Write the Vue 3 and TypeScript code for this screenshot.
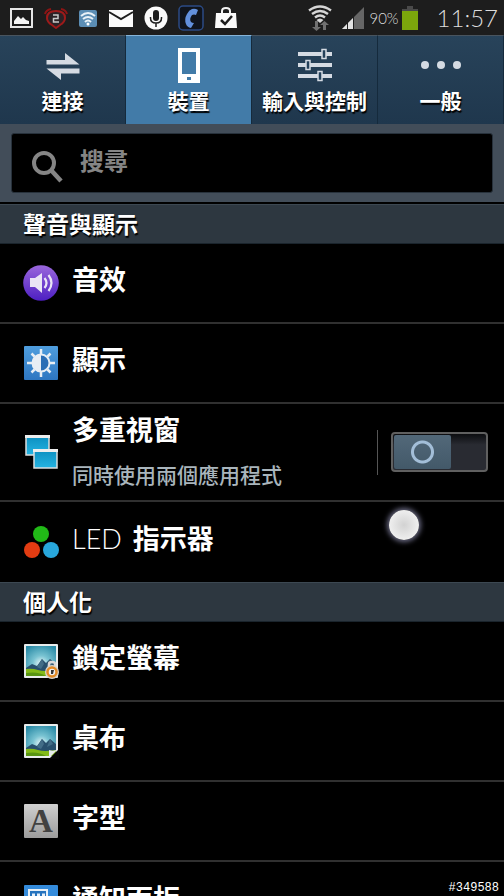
<script setup lang="ts">
import { ref } from 'vue'

type IconName = 'sound' | 'display' | 'windows' | 'led' | 'lock' | 'wallpaper' | 'font' | 'panel'

interface Item {
  icon: IconName
  title: string
  latin?: string
  note?: string
}

interface Section {
  heading: string
  items: Item[]
}

const tabs = [
  { id: 'link', label: '連接' },
  { id: 'device', label: '裝置' },
  { id: 'input', label: '輸入與控制' },
  { id: 'general', label: '一般' },
]
const activeTab = ref('device')
const query = ref('')
const multiWindow = ref(false)

const sections: Section[] = [
  {
    heading: '聲音與顯示',
    items: [
      { icon: 'sound', title: '音效' },
      { icon: 'display', title: '顯示' },
      { icon: 'windows', title: '多重視窗', note: '同時使用兩個應用程式' },
      { icon: 'led', latin: 'LED', title: '指示器' },
    ],
  },
  {
    heading: '個人化',
    items: [
      { icon: 'lock', title: '鎖定螢幕' },
      { icon: 'wallpaper', title: '桌布' },
      { icon: 'font', title: '字型' },
      { icon: 'panel', title: '通知面板' },
    ],
  },
]
</script>

<template>
  <div class="screen">
    <header class="status">
      <div class="notices">
        <svg width="24" height="22" viewBox="0 0 24 22">
          <rect x="1" y="2" width="21" height="18" fill="#1b1b1b" stroke="#e6e6e6" stroke-width="2" />
          <path d="M4 17v-3l4-5 3 3 2-2 3 3 3 1v3z" fill="#f4f4f4" />
        </svg>
        <svg width="24" height="22" viewBox="0 0 24 22">
          <path d="M1 7q1-4 6-5M23 7q-1-4-6-5" fill="none" stroke="#8d1414" stroke-width="2" />
          <path d="M3 11q0-7 9-7t9 7q0 4-5 7l-4 3-4-3q-5-3-5-7z" fill="#2b2226" stroke="#9d1a1a" stroke-width="2" />
          <path d="M9 8h5v3.500H9.500V15H15" fill="none" stroke="#c9c9c9" stroke-width="1.500" />
        </svg>
        <svg width="20" height="22" viewBox="0 0 20 22">
          <rect x="1" y="3" width="18" height="17" rx="2" fill="#5b8db4" />
          <path d="M3 9q7-6 14 0M5 12q5-4 10 0M7 15q3-3 6 0" fill="none" stroke="#e9f1f7" stroke-width="2" />
          <circle cx="10" cy="17" r="1.500" fill="#fff" />
        </svg>
        <svg width="26" height="22" viewBox="0 0 26 22">
          <path d="M1 3h24v17H1z" fill="#fafafa" />
          <path d="M1 5l12 7 12-7" fill="none" stroke="#1d1d1d" stroke-width="2" />
        </svg>
        <svg width="24" height="24" viewBox="0 0 24 24">
          <circle cx="12" cy="12" r="11.500" fill="#fafafa" />
          <rect x="9" y="4" width="6" height="11" rx="3" fill="#1d1d1d" />
          <path d="M6.500 11v1q0 5 5.500 5t5.500-5v-1M12 17v4" fill="none" stroke="#1d1d1d" stroke-width="1.500" />
        </svg>
        <svg width="26" height="26" viewBox="0 0 26 26">
          <rect x="1" y="1" width="24" height="24" rx="4" fill="#10141c" stroke="#2b4a84" stroke-width="1.500" />
          <path d="M14 4q3-1 6 1l-2 5q-2-1-4 0-3 4-1 7 1 1 3 1l-3 5q-4-1-5-4Q6 14 9 9q2-4 5-5z" fill="#6290dc" />
        </svg>
        <svg width="24" height="24" viewBox="0 0 24 24">
          <path d="M8 8V5q0-3 4-3t4 3v3" fill="none" stroke="#f2f2f2" stroke-width="2" />
          <path d="M2 7h20l1 15H1z" fill="#fafafa" />
          <path d="M7 14l4 4 7-8" fill="none" stroke="#1d1d1d" stroke-width="2.500" />
        </svg>
      </div>
      <div class="system">
        <svg class="wifi" width="26" height="27" viewBox="0 0 26 27">
          <path d="M2 6.500q11-8 22 0M5 10q8-6 16 0M8 13.500q5-4 10 0" fill="none" stroke="#d6d6d6" stroke-width="2.400" />
          <path d="M9.500 16q3.500-3 7 0L13 19z" fill="#d6d6d6" />
          <path d="M8 17v6H5l4.500 4 4.500-4h-3v-6zM16 26v-5h-3l4.500-4 4.500 4h-3v5z" fill="#707070" />
        </svg>
        <svg class="signal" width="24" height="24" viewBox="0 0 24 24">
          <path d="M23 1v22H1z" fill="#666" />
          <path d="M12 12v11H1z" fill="#e2e2e2" />
          <path d="M6.500 16v7M12.500 10v13" stroke="#1d1d1d" />
        </svg>
        <span class="percent">90%</span>
        <svg class="battery" width="18" height="26" viewBox="0 0 18 26">
          <path d="M6 1h6v3h5v2H1V4h5z" fill="#4a4a4a" />
          <path d="M1 6h16v19H1z" fill="#7ba60c" />
        </svg>
        <time class="clock">11:57</time>
      </div>
    </header>

    <nav class="tabs">
      <button
        v-for="tab in tabs"
        :key="tab.id"
        type="button"
        class="tab"
        :class="{ active: tab.id === activeTab }"
        @click="activeTab = tab.id"
      >
        <svg v-if="tab.id === 'link'" width="40" height="40" viewBox="0 0 40 40">
          <path d="M3.500 16h18.500V9l14.500 11.500h-33zM36.500 24.500h-33L18 36v-6.500h18.500z" fill="#d5dbe3" />
        </svg>
        <svg v-else-if="tab.id === 'device'" width="40" height="40" viewBox="0 0 40 40">
          <path fill-rule="evenodd" d="M9 4h22v35H9zM13 8v22h14V8zM18 33v3h4v-3z" fill="#fff" />
        </svg>
        <svg v-else-if="tab.id === 'input'" width="40" height="40" viewBox="0 0 40 40">
          <path d="M3 10h34M3 21h34M3 32h34" stroke="#d5dbe3" stroke-width="4" />
          <path d="M27 5.500h4v9h-4zM11 16.500h4v9h-4zM23 27.500h4v9h-4z" fill="#24415a" stroke="#d5dbe3" stroke-width="1.500" />
        </svg>
        <svg v-else width="40" height="40" viewBox="0 0 40 40">
          <g fill="#d5dbe3"><circle cx="4" cy="21" r="4" /><circle cx="20" cy="21" r="4" /><circle cx="36" cy="21" r="4" /></g>
        </svg>
        <span>{{ tab.label }}</span>
      </button>
    </nav>

    <form class="search" @submit.prevent>
      <label class="field">
        <svg width="34" height="34" viewBox="0 0 34 34" aria-hidden="true">
          <circle cx="13" cy="14" r="10" fill="none" stroke="#858585" stroke-width="4" />
          <path d="M19.500 20.500L30 32" stroke="#858585" stroke-width="4.500" />
        </svg>
        <input v-model="query" type="text" placeholder="搜尋" aria-label="搜尋" />
      </label>
    </form>

    <main class="list">
      <section v-for="section in sections" :key="section.heading">
        <h2>{{ section.heading }}</h2>
        <ul>
          <li v-for="item in section.items" :key="item.icon" :class="{ tall: item.note }">
            <svg v-if="item.icon === 'sound'" class="icon" viewBox="0 0 36 36">
              <defs><linearGradient id="purple" x2="0" y2="1"><stop stop-color="#9a67dc" /><stop offset="1" stop-color="#4d1fc2" /></linearGradient></defs>
              <circle cx="18" cy="18" r="17.800" fill="url(#purple)" />
              <path d="M7 13h5l7-5v20l-7-6H7z" fill="#eae5f5" />
              <path d="M21.500 13q4 5 0 10M25.500 10q6 8 0 16" fill="none" stroke="#eae5f5" stroke-width="2.200" />
            </svg>
            <svg v-else-if="item.icon === 'display'" class="icon" viewBox="0 0 36 36">
              <defs><linearGradient id="blue" x2="0" y2="1"><stop stop-color="#4f9ede" /><stop offset="1" stop-color="#2d76c1" /></linearGradient></defs>
              <rect x="1" y="1" width="34" height="34" rx="1" fill="url(#blue)" />
              <path d="M18 4v5M18 27v5M4 18h5M27 18h5M8.500 8.500l3 3M24.500 24.500l3 3M27.500 8.500l-3 3M11.500 24.500l-3 3" stroke="#e8eef4" stroke-width="2.500" />
              <circle cx="18" cy="18" r="8.500" fill="#2c6fb5" stroke="#e8eef4" stroke-width="2" />
              <path d="M18 9.500a8.500 8.500 0 0 0 0 17z" fill="#e8eef4" />
            </svg>
            <svg v-else-if="item.icon === 'windows'" class="icon" viewBox="0 0 36 36">
              <defs><linearGradient id="cyan" x2="0" y2="1"><stop stop-color="#0c8fc0" /><stop offset="1" stop-color="#25b4e2" /></linearGradient></defs>
              <g stroke="#dcdede" stroke-width="1.500" fill="url(#cyan)">
                <path d="M3 2h23v19H3z" /><path d="M11 16h23v18H11z" />
              </g>
              <path d="M2 1h25v3H2zM10 15h25v3H10z" fill="#eee" />
            </svg>
            <svg v-else-if="item.icon === 'led'" class="icon" viewBox="0 0 36 36">
              <circle cx="18" cy="10" r="8" fill="#21ba17" /><circle cx="9" cy="26" r="8" fill="#e23c12" /><circle cx="28" cy="26" r="8" fill="#28a7dc" />
            </svg>
            <svg v-else-if="item.icon === 'lock' || item.icon === 'wallpaper'" class="icon" viewBox="0 0 36 36">
              <defs>
                <radialGradient id="sky" cy="0.600" r="0.700"><stop stop-color="#edfbfb" /><stop offset="0.400" stop-color="#79c3d2" /><stop offset="1" stop-color="#2889a5" /></radialGradient>
              </defs>
              <rect x="1" y="1" width="34" height="34" rx="1" fill="#e8ecec" />
              <path d="M3 3h30v30H3z" fill="url(#sky)" />
              <path d="M3 25l6-4 5 2 5-7 4 4 4-4 6 5v9H3z" fill="#28506d" />
              <path d="M14 24l5-8 2 5-3 5zM24 24l3-8 3 5z" fill="#426d87" />
              <path d="M3 26q6-1 12 1t18 0v6H3z" fill="#83ba18" />
              <path d="M3 30q12-2 20 3H3z" fill="#579412" />
              <g v-if="item.icon === 'lock'">
                <path d="M26 25v-4q0-2 3-2t3 2v4" fill="none" stroke="#d9d9d9" stroke-width="2.500" />
                <circle cx="29" cy="29" r="7" fill="#d8d3ca" />
                <circle cx="29" cy="29" r="4.500" fill="#eee" stroke="#e28a25" stroke-width="2.500" />
                <path d="M28 27h3l-1 4h-2z" fill="#353535" />
              </g>
              <g v-else>
                <path d="M26 36l10-10v10z" fill="#050505" />
                <path d="M26 35v-8q5 2 9-1z" fill="#e8ebeb" />
              </g>
            </svg>
            <svg v-else-if="item.icon === 'font'" class="icon" viewBox="0 0 36 36">
              <defs><linearGradient id="grey" x2="0" y2="1"><stop stop-color="#d0d0d0" /><stop offset="1" stop-color="#9c9c9c" /></linearGradient></defs>
              <rect x="1" y="1" width="34" height="34" rx="1" fill="url(#grey)" />
              <text x="18" y="29" text-anchor="middle" class="serif">A</text>
            </svg>
            <svg v-else class="icon" viewBox="0 0 36 36">
              <rect x="1" y="1" width="34" height="34" rx="1" fill="#348bdb" />
              <path d="M6 6h18v24H6z" fill="#2673be" stroke="#e8f0f7" stroke-width="2" />
              <path d="M9 11h3M14 11h3M19 11h3M9 15h3M14 15h3M19 15h3" stroke="#e8f0f7" stroke-width="3" />
            </svg>

            <div class="words">
              <h3><span v-if="item.latin" class="latin">{{ item.latin }}</span>{{ item.title }}</h3>
              <p v-if="item.note">{{ item.note }}</p>
            </div>
            <label v-if="item.note" class="switch">
              <input v-model="multiWindow" type="checkbox" :aria-label="item.title" />
            </label>
          </li>
        </ul>
      </section>
    </main>

    <span class="touch" aria-hidden="true"></span>
    <span class="tag">#349588</span>
  </div>
</template>

<style>
body {
  margin: 0;
  background: #000;
}
</style>

<style scoped>
.screen {
  position: relative;
  display: flex;
  flex-direction: column;
  height: 100vh;
  overflow: hidden;
  background: #000;
  color: #fff;
  font-family: "Noto Sans CJK TC", sans-serif;
  font-weight: 700;
}

svg {
  display: block;
  flex: none;
}

.status {
  display: flex;
  flex: none;
  align-items: center;
  justify-content: space-between;
  box-sizing: border-box;
  height: 35px;
  padding: 0 6px 0 10px;
  background: #1d1d1d;
}

.notices {
  display: flex;
  align-items: center;
  gap: 10px;
}

.system {
  display: flex;
  align-items: center;
  color: #dcdcdc;
  font-family: Lato, sans-serif;
  font-weight: 300;
}

.signal {
  margin: 0 4px 0 8px;
}

.percent {
  font-size: 15px;
}

.battery {
  margin: 0 18px 0 2px;
}

.clock {
  font-size: 24px;
  line-height: 32px;
}

.tabs {
  display: grid;
  flex: none;
  grid-template-columns: repeat(4, 1fr);
  height: 89px;
}

.tab {
  display: flex;
  flex-direction: column;
  align-items: center;
  gap: 2px;
  padding: 8px 0 0;
  border: 0;
  border-top: 1px solid #49545e;
  border-right: 1px solid #152a3c;
  background: linear-gradient(#28435a, #1f374d);
  color: #fff;
  font: inherit;
  font-size: 21px;
  line-height: 28px;
  text-shadow: 1px 2px 1px #000;
  white-space: nowrap;
}

.tab.active {
  border-top-color: #86b4d8;
  background: #427ba8;
}

.search {
  flex: none;
  padding: 9px 11px;
  border-bottom: 2px solid #000;
  background: #424d59;
}

.field {
  display: flex;
  align-items: center;
  gap: 15px;
  box-sizing: border-box;
  height: 60px;
  padding: 6px 16px 0 19px;
  border: 1px solid #27313b;
  border-radius: 3px;
  background: #000;
}

.field input {
  flex: 1;
  min-width: 0;
  height: 36px;
  margin-bottom: 14px;
  padding: 0;
  border: 0;
  outline: 0;
  background: transparent;
  color: #fff;
  font: inherit;
  font-size: 24px;
}

.field input::placeholder {
  color: #858585;
  opacity: 1;
}

.list {
  flex: 1;
  min-height: 0;
  overflow: hidden;
}

h2,
h3,
p,
ul {
  margin: 0;
  padding: 0;
}

h2 {
  box-sizing: border-box;
  height: 40px;
  padding-left: 23px;
  border-top: 1px solid #3c4852;
  border-bottom: 1px solid #1a242c;
  background: #2d3740;
  font-size: 23px;
  line-height: 36px;
  text-shadow: 1px 2px 1px #000;
}

ul {
  list-style: none;
}

li {
  display: flex;
  align-items: center;
  gap: 13px;
  box-sizing: border-box;
  height: 80px;
  padding: 0 16px 0 23px;
  border-bottom: 2px solid #303030;
}

li:last-child {
  border-bottom: 0;
}

li.tall {
  height: 98px;
}

.icon {
  width: 36px;
  height: 36px;
}

.serif {
  fill: #414141;
  font-family: "Liberation Serif", serif;
  font-size: 33px;
  font-weight: 700;
}

.words {
  flex: 1;
}

h3 {
  padding-bottom: 8px;
  font-size: 27px;
  line-height: 36px;
}

.latin {
  margin-right: 11px;
  font-family: Lato, sans-serif;
  font-weight: 300;
}

p {
  color: #a9b5bc;
  font-size: 21px;
  font-weight: 500;
  line-height: 38px;
}

.switch {
  display: flex;
  align-items: center;
  height: 45px;
  padding-left: 13px;
  border-left: 1px solid #555;
}

.switch input {
  display: grid;
  align-items: center;
  box-sizing: border-box;
  width: 97px;
  height: 40px;
  margin: 0;
  padding: 1px;
  border: 2px solid #606060;
  border-radius: 4px;
  background: linear-gradient(#0c0d10, #292b32 30%);
  appearance: none;
}

.switch input::before {
  width: 57px;
  height: 34px;
  border-radius: 2px;
  background: radial-gradient(circle, transparent 8px, #a3bed8 9px 11px, transparent 12px), linear-gradient(#526879, #435969);
  content: "";
}

.switch input:checked::before {
  justify-self: end;
}

.touch {
  position: absolute;
  top: 510px;
  right: 85px;
  width: 30px;
  height: 30px;
  border-radius: 50%;
  background: radial-gradient(#d2d2d2, #f1f1f1 75%);
  box-shadow: 0 0 5px 2px #686880;
}

.tag {
  position: absolute;
  right: 5px;
  bottom: 0;
  font-family: "Liberation Mono", monospace;
  font-size: 12px;
  font-weight: 400;
  line-height: 16px;
}
</style>
